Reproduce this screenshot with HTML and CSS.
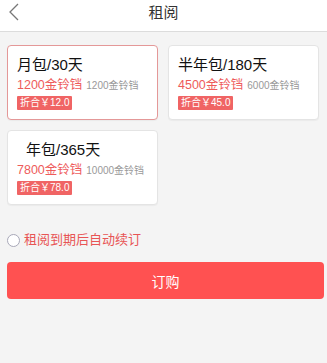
FILE: index.html
```html
<!DOCTYPE html>
<html>
<head>
<meta charset="utf-8">
<link rel="stylesheet" href="styles.css">
</head>
<body>
<div class="header">
  <svg class="back" width="12" height="18" viewBox="0 0 12 18"><path d="M10 1 L2 9 L10 17" fill="none" stroke="#777" stroke-width="1.3"/></svg>
  <div class="title">租阅</div>
</div>
<div class="cards">
  <div class="card selected">
    <div class="name">月包/30天</div>
    <div class="price"><span class="now">1200金铃铛</span><span class="old">1200金铃铛</span></div>
    <div class="badge">折合￥12.0</div>
  </div>
  <div class="card">
    <div class="name">半年包/180天</div>
    <div class="price"><span class="now">4500金铃铛</span><span class="old">6000金铃铛</span></div>
    <div class="badge">折合￥45.0</div>
  </div>
  <div class="card">
    <div class="name indent">年包/365天</div>
    <div class="price"><span class="now">7800金铃铛</span><span class="old">10000金铃铛</span></div>
    <div class="badge">折合￥78.0</div>
  </div>
</div>
<div class="auto">
  <span class="radio"></span>
  <span class="auto-text">租阅到期后自动续订</span>
</div>
<div class="buy">订购</div>
</body>
</html>
```
FILE: styles.css
```css
html, body {
  margin: 0;
  padding: 0;
  background: #f4f4f4;
  font-family: "Liberation Sans", "Noto Sans CJK SC", sans-serif;
}
.header {
  height: 31px;
  background: #fff;
  border-bottom: 1px solid #dcdcdc;
  display: flex;
  justify-content: center;
  position: relative;
}
.back {
  position: absolute;
  left: 8px;
  top: 3px;
}
.title {
  font-size: 15px;
  color: #333;
  line-height: 25px;
}
.cards {
  display: grid;
  grid-template-columns: 151px 151px;
  column-gap: 10px;
  row-gap: 10px;
  padding: 13px 8px 0 7px;
}
.card {
  height: 75px;
  box-sizing: border-box;
  background: #fff;
  border: 1px solid #e4e4e4;
  border-radius: 4px;
  padding: 9px 0 0 9px;
  box-shadow: 0 1px 1px rgba(0,0,0,0.04);
}
.card.selected {
  border-color: #e49898;
}
.name {
  font-size: 15px;
  color: #111;
  line-height: 20px;
}
.name.indent {
  padding-left: 9px;
}
.price {
  line-height: 18px;
  margin-top: 0;
  white-space: nowrap;
}
.now {
  font-size: 12.5px;
  color: #ee5b5b;
}
.old {
  font-size: 10px;
  color: #999;
  margin-left: 4px;
}
.badge {
  width: fit-content;
  margin-top: 1px;
  background: #f06464;
  color: #fff;
  font-size: 10px;
  line-height: 14px;
  height: 14px;
  padding: 0 3px;
  border-radius: 1px;
}
.auto {
  display: flex;
  align-items: center;
  padding: 26px 0 0 7px;
}
.radio {
  width: 11px;
  height: 11px;
  border: 1px solid #a8a8b8;
  border-radius: 50%;
  background: #fff;
}
.auto-text {
  margin-left: 4px;
  font-size: 13px;
  color: #e85555;
  line-height: 18px;
}
.buy {
  margin: 13px 3px 0 7px;
  height: 37px;
  background: #ff5151;
  border-radius: 4px;
  color: #fff;
  font-size: 14px;
  display: flex;
  align-items: center;
  justify-content: center;
}
```
